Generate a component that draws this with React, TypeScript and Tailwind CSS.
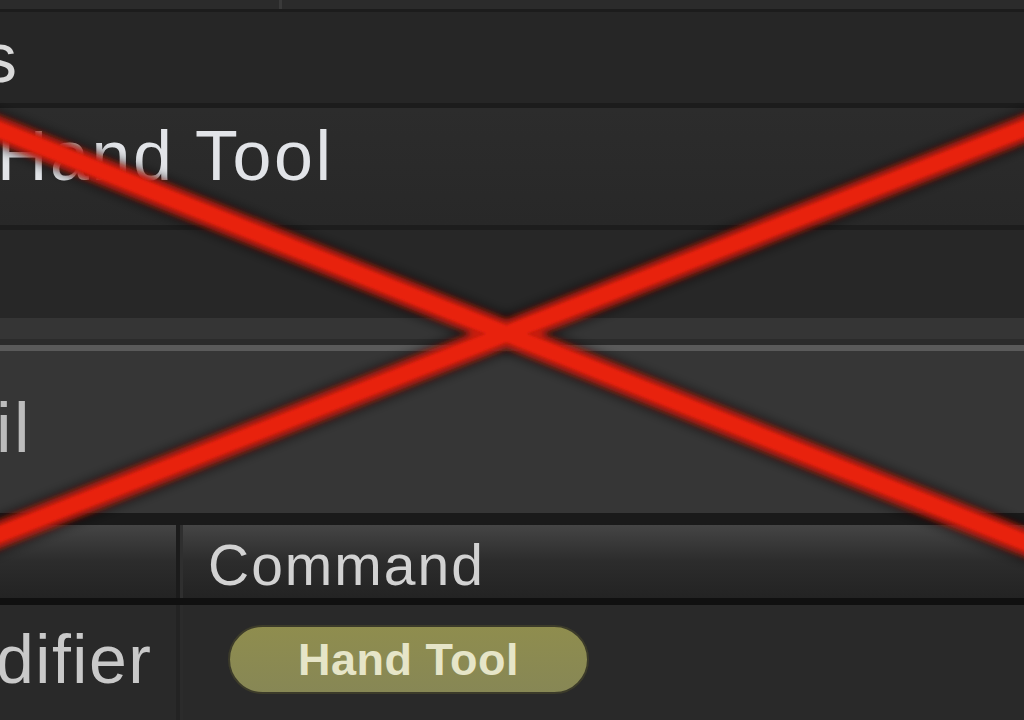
import React from 'react';

// Big label rows of the zoomed shortcut editor
function ListRow({ height, pad, bg, text, shift, color }: { height: string; pad: string; bg: string; text: string; shift: string; color: string }) {
  return (
    <div className={`${height} ${pad} ${bg} overflow-hidden`}>
      <div className={`${shift} ${color} text-[70px] leading-none tracking-[2.5px] whitespace-nowrap`}>{text}</div>
    </div>
  );
}

export default function App() {
  return (
    <div className="relative w-[1024px] h-[720px] overflow-hidden bg-[#272727] font-['Liberation_Sans',Arial,sans-serif]">
      {/* top strip */}
      <div className="h-[9px] bg-[#2b2b2b] flex">
        <div className="w-[279px]" />
        <div className="w-[3px] bg-[#3a3a3a]" />
      </div>
      <div className="h-[3px] bg-[#1c1c1c]" />

      <div className="h-[91px] pt-[11px] bg-[#262626] overflow-hidden">
        <div className="-ml-[18px] text-[70px] leading-none text-[#d9d9d9] whitespace-nowrap">s</div>
      </div>
      <div className="h-[5px] bg-[#1c1c1c]" />

      <ListRow height="h-[117px]" pad="pt-[13px]" bg="bg-gradient-to-b from-[#2c2c2c] to-[#282828]" text="Hand Tool" shift="-ml-[3px]" color="text-[#e2e4e8]" />
      <div className="h-[5px] bg-[#1d1d1d]" />

      <div className="h-[88px] bg-[#272727]" />
      <div className="h-[21px] bg-[#353535]" />
      <div className="h-[6px] bg-[#2b2b2b]" />
      <div className="h-[6px] bg-[#5a5a5a]" />

      <ListRow height="h-[162px]" pad="pt-[42px]" bg="bg-[#363636]" text="il" shift="-ml-[4px]" color="text-[#bcbcbc]" />
      <div className="h-[12px] bg-[#1a1a1a]" />

      {/* table header */}
      <div className="h-[73px] flex bg-gradient-to-b from-[#454545] via-[#2c2c2c] to-[#232323]">
        <div className="w-[176px]" />
        <div className="w-[4px] bg-[#1b1b1b]" />
        <div className="w-[3px] bg-[#2f2f2f]" />
        <div className="pl-[25px] pt-[12px] text-[57px] leading-none tracking-[2px] text-[#d2d2d2] whitespace-nowrap">Command</div>
      </div>
      <div className="h-[7px] bg-[#101010]" />

      {/* table row */}
      <div className="h-[115px] flex bg-[#292929]">
        <div className="w-[176px] pt-[20px] overflow-hidden">
          <div className="-ml-[4px] text-[68px] leading-none tracking-[1.5px] text-[#c9c9c9] whitespace-nowrap">difier</div>
        </div>
        <div className="w-[4px] bg-[#232323]" />
        <div className="w-[3px] bg-[#2b2b2b]" />
        <div className="pl-[45px] pt-[20px]">
          <div className="w-[361px] h-[69px] rounded-full border-2 border-[#3c3b2a] bg-gradient-to-b from-[#8f8d4e] to-[#878755] flex items-center justify-center">
            <span className="text-[45px] leading-none font-bold tracking-[0.5px] text-[#e6e5c8] whitespace-nowrap">Hand Tool</span>
          </div>
        </div>
      </div>

      {/* red cross drawn over the screenshot */}
      <svg className="absolute inset-0 pointer-events-none" width="1024" height="720" viewBox="0 0 1024 720">
        <defs>
          <filter id="soft" x="-10%" y="-10%" width="120%" height="120%">
            <feGaussianBlur stdDeviation="5" />
          </filter>
          <filter id="glow" x="-10%" y="-10%" width="120%" height="120%">
            <feGaussianBlur stdDeviation="3" />
          </filter>
          <filter id="edge" x="-10%" y="-10%" width="120%" height="120%">
            <feGaussianBlur stdDeviation="1.2" />
          </filter>
        </defs>
        <g filter="url(#soft)" stroke="#000" strokeOpacity="0.4" strokeWidth="38">
          <line x1="-40" y1="114" x2="1064" y2="558" />
          <line x1="-40" y1="550" x2="1064" y2="113" />
        </g>
        <g filter="url(#glow)" stroke="#c81a0c" strokeWidth="26">
          <line x1="-40" y1="114" x2="1064" y2="558" />
          <line x1="-40" y1="550" x2="1064" y2="113" />
        </g>
        <g filter="url(#edge)" stroke="#e8230f" strokeWidth="15">
          <line x1="-40" y1="114" x2="1064" y2="558" />
          <line x1="-40" y1="550" x2="1064" y2="113" />
        </g>
      </svg>
    </div>
  );
}
